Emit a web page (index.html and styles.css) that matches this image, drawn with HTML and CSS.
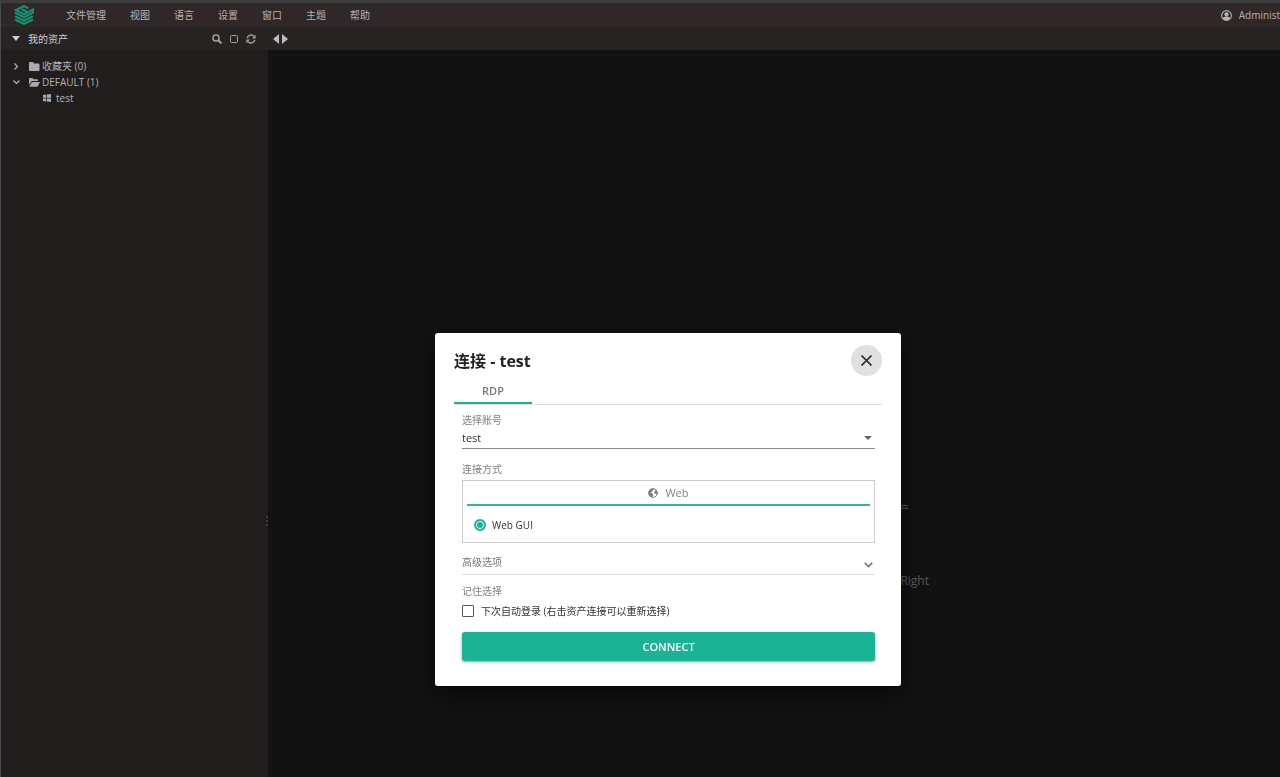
FILE: index.html
```html
<!DOCTYPE html>
<html lang="zh-CN">
<head>
    <meta charset="utf-8" />
    <meta name="viewport" content="width=device-width, initial-scale=1" />
    <title>连接 - test</title>
    <link rel="stylesheet" href="styles.css">
</head>
<body>
    <header class="topbar">
        <a class="logo" href="#" aria-label="Home">
            <svg width="20" height="20" viewBox="0 0 20 20" fill="none" stroke="#16906f" stroke-width="2.2">
                <path d="M14.500 3.300 10 1.200 2 5 10 9.200 14 7 7.500 4.200" />
                <path d="M1 7.600 10 12.200 19 7.600V4.500L15 6.500" />
                <path d="M1 11.200 10 15.600 19 11.200" />
                <path d="M1 14.600 10 18.800 19 14.600" />
            </svg>
        </a>
        <nav class="menu">
            <a href="#">文件管理</a>
            <a href="#">视图</a>
            <a href="#">语言</a>
            <a href="#">设置</a>
            <a href="#">窗口</a>
            <a href="#">主题</a>
            <a href="#">帮助</a>
        </nav>
        <a class="user" href="#">
            <svg width="11" height="11" viewBox="0 0 12 12">
                <circle cx="6" cy="6" r="5.3" fill="none" stroke="currentColor" stroke-width="1.2" />
                <circle cx="6" cy="4.7" r="2.3" fill="currentColor" />
                <path d="M2 9.500C2.400 7.400 4 7 6 7s3.600.4 4 2.500A5 5 0 0 1 6 11.300a5 5 0 0 1-4-1.800z" fill="currentColor" />
            </svg>
            <span>Administ</span>
        </a>
    </header>

    <div class="toolbar">
        <div class="assets-head">
            <button class="assets-toggle" type="button">
                <svg width="8" height="5" viewBox="0 0 8 5"><path d="M0 0h8L4 5z" fill="currentColor" /></svg>
                <span>我的资产</span>
            </button>
            <button class="tool" type="button" aria-label="Search">
                <svg width="10" height="10" viewBox="0 0 10 10" fill="none" stroke="currentColor" stroke-width="1.5">
                    <circle cx="4" cy="4" r="3.1" /><path d="M6.3 6.3 9.4 9.4" stroke-width="2" />
                </svg>
            </button>
            <button class="tool" type="button" aria-label="Select">
                <svg width="10" height="10" viewBox="0 0 10 10"><rect x="1.5" y="1.5" width="7" height="7" rx="1" fill="none" stroke="currentColor" /></svg>
            </button>
            <button class="tool" type="button" aria-label="Refresh">
                <svg width="10" height="10" viewBox="0 0 10 10">
                    <path d="M1.2 4.2A3.9 3.9 0 0 1 8 2.4M8.8 5.8A3.9 3.9 0 0 1 2 7.6" fill="none" stroke="currentColor" stroke-width="1.4" />
                    <path d="M9.6.8v3.6H6zM.4 9.2V5.6H4z" fill="currentColor" />
                </svg>
            </button>
        </div>
        <button class="tool" type="button" aria-label="Scroll tabs">
            <svg width="15" height="10" viewBox="0 0 15 10" fill="#bbb"><path d="M6 0v10L0 5zM9 0v10l6-5z" /></svg>
        </button>
    </div>

    <div class="content">
        <aside class="sidebar">
            <ul class="tree">
                <li>
                    <svg class="arrow" width="7" height="7" viewBox="0 0 7 7"><path d="M1.500.500 4.500 3.500 1.500 6.500" /></svg>
                    <svg class="folder" width="11" height="9" viewBox="0 0 11 9"><path d="M0 1q0-1 1-1h3l1 1.400h4.500q1 0 1 1V8q0 1-1 1H1Q0 9 0 8z" /></svg>
                    <span>收藏夹 (0)</span>
                </li>
                <li>
                    <svg class="arrow" width="7" height="7" viewBox="0 0 7 7"><path d="M.500 1.500 3.500 4.500 6.500 1.500" /></svg>
                    <svg class="folder" width="11" height="9" viewBox="0 0 11 9"><path d="M0 7V1q0-1 1-1h2.500l1 1.200H8q1 0 1 1V3H3.500Q2.500 3 2 4zM.4 8.600 2.600 4.600Q3 4 3.800 4H11L9 8q-.4.800-1.200.800H.400z" /></svg>
                    <span>DEFAULT (1)</span>
                </li>
                <li class="leaf">
                    <svg class="folder" width="8" height="8" viewBox="0 0 8 8"><path d="M0 1l3.300-.5v3.200H0zM4 .4 8 0v3.700H4zM0 4.400h3.300v3.200L0 7.100zM4 4.400h4V8l-4-.5z" /></svg>
                    <span>test</span>
                </li>
            </ul>
            <div class="handle"><i></i><i></i><i></i></div>
        </aside>
        <main class="workspace">
            <p class="hint">产</p>
            <p class="hint hint-key">Right</p>
        </main>
    </div>

    <div class="overlay">
        <form class="dialog" role="dialog" aria-labelledby="dialog-title">
            <div class="dialog-head">
                <h1 id="dialog-title">连接 - test</h1>
                <button class="close" type="button" aria-label="Close">
                    <svg width="11" height="11" viewBox="0 0 11 11"><path d="M.500.500l10 10M10.500.500l-10 10" stroke="currentColor" stroke-width="1.700" /></svg>
                </button>
            </div>
            <div class="tabs">
                <button class="tab" type="button">RDP</button>
            </div>
            <div class="fields">
                <label class="label" for="account">选择账号</label>
                <div class="select">
                    <select id="account">
                        <option>test</option>
                    </select>
                    <svg width="8" height="4" viewBox="0 0 8 4"><path d="M0 0h8L4 4z" fill="currentColor" /></svg>
                </div>

                <div class="label label-method">连接方式</div>
                <div class="method">
                    <button class="method-tab" type="button">
                        <svg width="10" height="10" viewBox="0 0 10 10">
                            <circle cx="5" cy="5" r="4.400" fill="none" stroke="currentColor" />
                            <path d="M.700 4Q1.500 1 5 .600L6 1.500 4.500 2.500 4 4 2.500 4.500 4.500 5.500 5.500 7 4 9.500Q1 8.500.700 6zM7 2.500 8.500 2 9.500 5 8.500 6.500 7 5.500 6 4.500z" fill="currentColor" />
                        </svg>
                        <span>Web</span>
                    </button>
                    <label class="choice">
                        <input type="radio" name="method" checked>
                        <span>Web GUI</span>
                    </label>
                </div>

                <button class="advanced" type="button">
                    <span>高级选项</span>
                    <svg width="9" height="6" viewBox="0 0 9 6"><path d="M.8.8 4.500 4.500 8.200.8" fill="none" stroke="currentColor" stroke-width="1.700" /></svg>
                </button>

                <div class="label label-remember">记住选择</div>
                <label class="remember">
                    <input type="checkbox">
                    <span>下次自动登录 (右击资产连接可以重新选择)</span>
                </label>
                <button class="connect" type="submit">CONNECT</button>
            </div>
        </form>
    </div>
</body>
</html>
```

FILE: styles.css
```css
* {
    box-sizing: border-box;
}
body {
    display: flex;
    flex-direction: column;
    min-height: 100vh;
    margin: 0;
    border-top: 3px solid #3d3d3d;
    border-left: 1px solid #4b4b4b;
    background-color: #121212;
    color: #b5b2b2;
    font-family: "Open Sans", "Noto Sans CJK SC", sans-serif;
    font-size: 10px;
    line-height: 16px;
    overflow: hidden;
}
button, select, input {
    margin: 0;
    padding: 0;
    border: 0;
    background: none;
    color: inherit;
    font: inherit;
}
button {
    cursor: pointer;
}
a {
    color: inherit;
    text-decoration: none;
}
svg {
    display: block;
    flex: none;
}

/* top menu */
.topbar {
    display: flex;
    align-items: center;
    height: 24px;
    padding-left: 13px;
    background-color: #2f2728;
}
.menu {
    display: flex;
    gap: 24px;
    margin-left: 32px;
}
.user {
    display: flex;
    align-items: center;
    gap: 7px;
    margin-left: auto;
}
.toolbar {
    display: flex;
    align-items: center;
    height: 23px;
    background-color: #272322;
}
.assets-head {
    display: flex;
    align-items: center;
    gap: 5px;
    width: 267px;
    padding: 0 11px;
}
.assets-toggle {
    display: flex;
    align-items: center;
    gap: 8px;
    margin-right: auto;
    color: #d0cdcd;
}
.tool {
    padding: 0 1px;
    color: #a3a0a0;
}
.toolbar > .tool {
    margin-left: 4px;
}

/* asset tree */
.content {
    display: flex;
    flex: 1;
}
.sidebar {
    display: flex;
    justify-content: space-between;
    width: 267px;
    background-color: #211d1c;
}
.tree {
    margin: 0;
    padding: 8px 0 0 12px;
    list-style: none;
}
.tree li {
    display: flex;
    align-items: center;
}
.tree .leaf {
    gap: 3px;
    padding-left: 30px;
}
.arrow {
    margin-right: 9px;
    fill: none;
    stroke: currentColor;
    stroke-width: 1.2;
}
.folder {
    margin-right: 2px;
    fill: #aaa;
}
.handle {
    display: flex;
    flex-direction: column;
    gap: 2px;
    align-self: center;
    padding-top: 214px;
}
.handle i {
    width: 2px;
    height: 2px;
    background-color: #3c3838;
}
.workspace {
    display: flex;
    flex: 1;
    flex-direction: column;
    justify-content: center;
    align-items: flex-end;
    gap: 56px;
    padding: 263px 351px 0 0;
    color: #5c5c5c;
}
.hint {
    margin: 0;
    padding-right: 20px;
}
.hint-key {
    padding-right: 0;
    font-size: 12px;
}

/* connect dialog */
.overlay {
    position: fixed;
    inset: 0;
    display: flex;
    align-items: center;
    justify-content: center;
    padding: 242px 0 0 56px;
}
.dialog {
    width: 466px;
    max-width: 100%;
    padding: 12px 19px 25px;
    border-radius: 3px;
    background-color: #fff;
    color: #333;
    box-shadow: 0 8px 24px rgba(0, 0, 0, .6);
}
.dialog-head {
    display: flex;
    justify-content: space-between;
    align-items: center;
}
.dialog-head h1 {
    margin: 0;
    color: #222;
    font-size: 16px;
    line-height: 24px;
}
.close {
    display: grid;
    place-items: center;
    width: 31px;
    height: 31px;
    border-radius: 50%;
    background-color: #e0e0e0;
}
.tabs {
    display: flex;
    height: 29px;
    padding-top: 3px;
    border-bottom: 1px solid #dcdcdc;
}
.tab {
    width: 78px;
    border-bottom: 2px solid #1ab394;
    color: #777;
    font-size: 11px;
    font-weight: 600;
}
.fields {
    display: flex;
    flex-direction: column;
    padding: 7px 7px 0 8px;
}
.label {
    color: #808080;
}
.select {
    display: flex;
    align-items: center;
    height: 21px;
    padding-right: 3px;
    border-bottom: 1px solid #8c8c8c;
    color: #666;
}
.select select {
    flex: 1;
    appearance: none;
    color: #333;
    font-size: 11px;
    line-height: 20px;
}
.label-method {
    margin-top: 12px;
}
.method {
    margin-top: 3px;
    padding: 0 4px;
    height: 63px;
    border: 1px solid #ccc;
}
.method-tab {
    display: flex;
    align-items: center;
    justify-content: center;
    gap: 7px;
    width: 100%;
    height: 25px;
    border-bottom: 2px solid #2eb79b;
    color: #808080;
    font-size: 11px;
}
.choice, .remember {
    display: flex;
    align-items: center;
}
.choice {
    gap: 6px;
    padding: 11px 7px;
}
.choice input {
    appearance: none;
    width: 12px;
    height: 12px;
    border: 2px solid #1ab394;
    border-radius: 50%;
    background-color: #1ab394;
    box-shadow: inset 0 0 0 1px #fff;
}
.advanced {
    display: flex;
    align-items: center;
    justify-content: space-between;
    height: 24px;
    margin-top: 8px;
    padding: 0 2px 2px 0;
    border-bottom: 1px solid #dcdcdc;
    color: #777;
}
.advanced svg {
    margin-top: 6px;
}
.label-remember {
    margin-top: 8px;
}
.remember {
    gap: 7px;
    margin-top: 4px;
}
.remember input {
    appearance: none;
    width: 12px;
    height: 12px;
    border: 1px solid #555;
    border-radius: 1px;
}
.remember input:checked {
    background-color: #1ab394;
}
.connect {
    height: 29px;
    margin-top: 13px;
    border-radius: 3px;
    background-color: #1ab394;
    color: #fff;
    font-size: 11px;
    font-weight: 600;
    box-shadow: 0 1px 3px rgba(0, 0, 0, .4);
}
```
